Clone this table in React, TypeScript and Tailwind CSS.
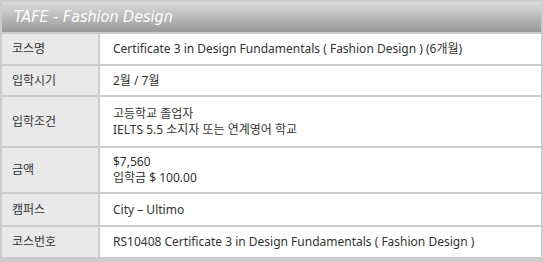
const rows: { label: string; value: string[]; h: string }[] = [
  { label: '코스명', value: ['Certificate 3 in Design Fundamentals ( Fashion Design ) (6개월)'], h: 'h-[30px]' },
  { label: '입학시기', value: ['2월 / 7월'], h: 'h-[29px]' },
  { label: '입학조건', value: ['고등학교 졸업자', 'IELTS 5.5 소지자 또는 연계영어 학교'], h: 'h-[49px]' },
  { label: '금액', value: ['$7,560', '입학금 $ 100.00'], h: 'h-[44px]' },
  { label: '캠퍼스', value: ['City – Ultimo'], h: 'h-[31px]' },
  { label: '코스번호', value: ['RS10408 Certificate 3 in Design Fundamentals ( Fashion Design )'], h: 'h-[30px]' },
];

export default function App() {
  return (
    <div className="w-[543px] h-[262px] bg-[#cccccc] p-[2px] font-['Noto_Sans','Noto_Sans_CJK_KR',sans-serif] text-[12px] text-[#333333]">
      <div className="h-[30px] bg-gradient-to-b from-[#dcdcdc] to-[#999999] flex items-center pl-[12px]">
        <h1 className="text-white italic text-[16px] font-['DejaVu_Sans_Condensed','DejaVu_Sans',sans-serif] [font-stretch:condensed]">TAFE - Fashion Design</h1>
      </div>
      <div className="grid grid-cols-[96px_1fr] gap-[2px] mt-[2px]">
        {rows.map((r) => (
          <div key={r.label} className="contents">
            <div className={`${r.h} bg-[#e9e9e9] flex items-center pl-[10px]`}>{r.label}</div>
            <div className={`${r.h} bg-white flex flex-col justify-center pl-[13px] leading-[16px]`}>
              {r.value.map((v) => (
                <span key={v}>{v}</span>
              ))}
            </div>
          </div>
        ))}
      </div>
    </div>
  );
}
